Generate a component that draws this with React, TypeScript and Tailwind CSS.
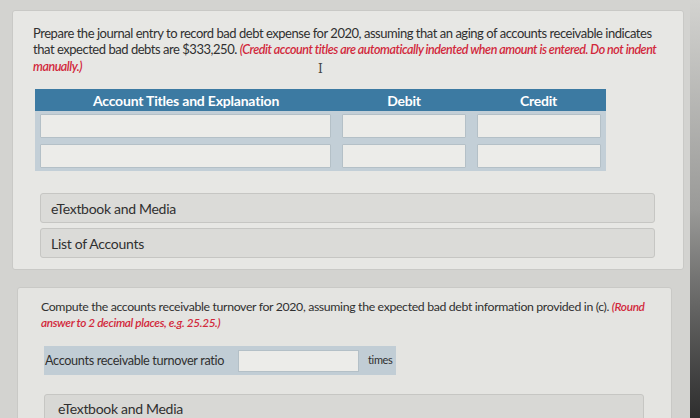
import React from "react";

const red = "text-[#d2283b] italic font-semibold";

function Cell({ w }: { w: string }) {
  return <div className={`${w} h-[24px] bg-[#ecece9] border border-[#b4c0c7] rounded-[1px]`} />;
}

export default function App() {
  return (
    <div className="w-[700px] h-[418px] overflow-hidden bg-[#d3d3d0] font-['Lato',sans-serif] text-[#303030] flex">
      <div className="w-[690px] pt-[10px] pl-[12px] flex flex-col">
        {/* Journal entry card */}
        <div className="shrink-0 w-[672px] h-[260px] bg-[#e7e7e4] border border-[#c9c9c6] rounded-[3px] pl-[20px] pt-[14px]">
          <p className="text-[13px] leading-[16px] tracking-[-0.47px]">
            Prepare the journal entry to record bad debt expense for 2020, assuming that an aging of accounts receivable indicates
            <br />
            that expected bad debts are $333,250. <span className={`${red} text-[12.5px]`}>(Credit account titles are automatically indented when amount is entered. Do not indent</span>
            <br />
            <span className={`${red} text-[12.5px]`}>manually.)</span>
            <span className="inline-block ml-[236px] translate-y-[2px] font-['DejaVu_Serif',serif] text-[12px] text-[#444]">I</span>
          </p>

          {/* Table */}
          <div className="mt-[14px] ml-[2px] w-[571px]">
            <div className="h-[22px] bg-[#3c7aa2] flex items-center text-white font-bold text-[14px] tracking-[-0.2px]">
              <div className="w-[302px] text-center">Account Titles and Explanation</div>
              <div className="w-[134px] text-center">Debit</div>
              <div className="w-[135px] text-center">Credit</div>
            </div>
            <div className="bg-[#c3cfd7] px-[5px] pt-[3px] pb-[3px] flex flex-col gap-[6px]">
              {[0, 1].map((r) => (
                <div key={r} className="flex gap-[11px]">
                  <Cell w="w-[291px]" />
                  <Cell w="w-[124px]" />
                  <Cell w="w-[124px]" />
                </div>
              ))}
            </div>
          </div>

          <div className="mt-[22px] ml-[7px] w-[615px] flex flex-col gap-[5px]">
            <div className="h-[30px] bg-[#dbdbd8] border border-[#c6c6c3] rounded-[3px] flex items-center pl-[10px] text-[14px] tracking-[-0.3px]">
              eTextbook and Media
            </div>
            <div className="h-[30px] bg-[#dbdbd8] border border-[#c6c6c3] rounded-[3px] flex items-center pl-[10px] text-[14px] tracking-[-0.3px]">
              List of Accounts
            </div>
          </div>
        </div>

        {/* Turnover card */}
        <div className="shrink-0 mt-[17px] ml-[5px] w-[655px] h-[200px] bg-[#e4e4e1] border border-[#c9c9c6] rounded-[3px] pl-[23px] pt-[11px]">
          <p className="text-[12.3px] leading-[16px] tracking-[-0.35px]">
            Compute the accounts receivable turnover for 2020, assuming the expected bad debt information provided in (c). <span className={`${red} text-[11.8px]`}>(Round</span>
            <br />
            <span className={`${red} text-[11.8px]`}>answer to 2 decimal places, e.g. 25.25.)</span>
          </p>

          <div className="mt-[15px] ml-[3px] w-[352px] h-[29px] bg-[#c1cdd5] flex items-center text-[12.7px] tracking-[-0.35px]">
            <span className="w-[194px] pl-[1px]">Accounts receivable turnover ratio</span>
            <div className="w-[121px] h-[22px] bg-[#ecece9] border border-[#b4c0c7]" />
            <span className="ml-[9px] text-[11px]">times</span>
          </div>

          <div className="mt-[19px] ml-[3px] w-[600px] h-[40px] bg-[#d8d8d5] border border-[#c6c6c3] rounded-[3px] pl-[13px] pt-[5px] text-[14px] leading-[18px] tracking-[-0.3px]">
            eTextbook and Media
          </div>
        </div>
      </div>
      <div className="w-[10px] h-full bg-gradient-to-b from-[#d3d3d0] via-[#9a9a98] to-[#2e2e2e]" />
    </div>
  );
}
